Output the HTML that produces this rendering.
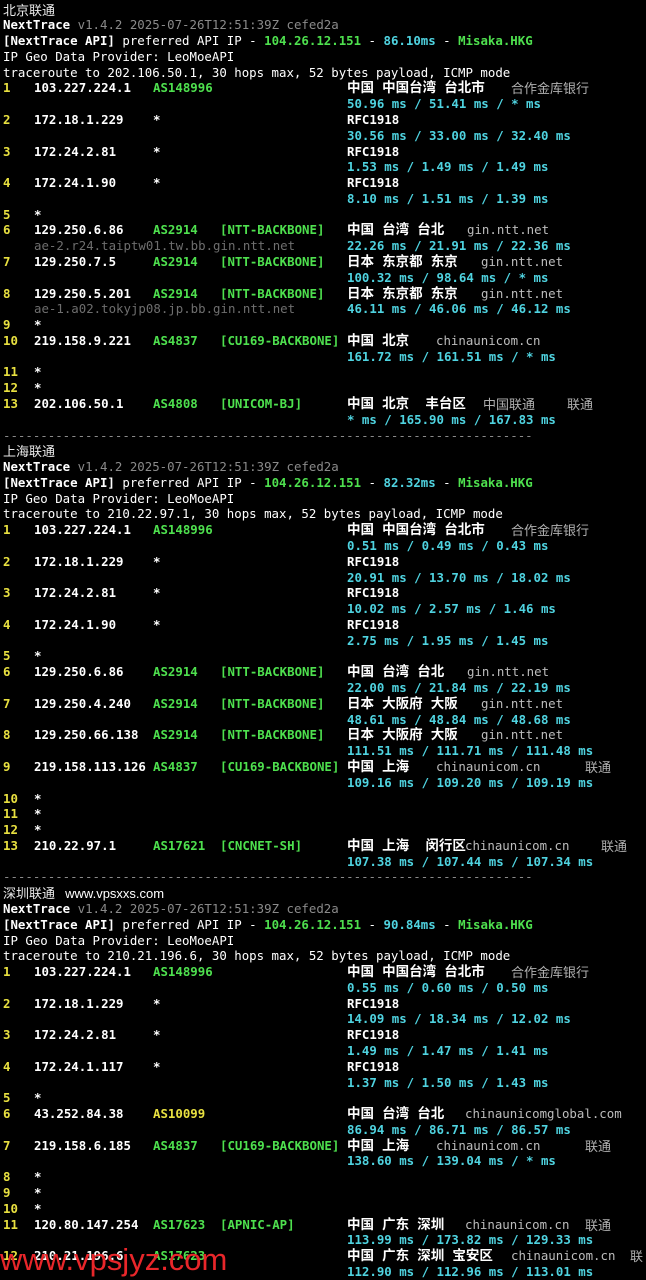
<!DOCTYPE html>
<html><head><meta charset="utf-8"><style>
html,body{margin:0;padding:0;background:#000;}
body{width:646px;height:1280px;position:relative;overflow:hidden;font-family:"DejaVu Sans Mono","Liberation Mono","Noto Sans CJK SC",monospace;font-size:12.4px;color:#d0d0d0;}
.r{position:absolute;left:0;width:646px;height:16px;line-height:16px;top:calc(var(--n)*15.78px + 1.5px);white-space:pre;}
.r span{position:absolute;top:0;}
.h{left:3px;color:#e8e040;font-weight:bold}
.i{left:34px;color:#fff;font-weight:bold}
.a{left:153px;color:#4ee04e;font-weight:bold}
.t{left:220px;color:#4ee04e;font-weight:bold}
.g{left:347px;color:#fff;font-weight:bold;font-family:"DejaVu Sans Mono","Noto Sans CJK SC",sans-serif;font-size:13.5px}
.m{left:347px;color:#4fd3e0;font-weight:bold}
.p{color:#bcbcbc;font-family:"DejaVu Sans Mono","Noto Sans CJK SC",monospace;}
.c{color:#b0b0b0;font-family:"Noto Sans CJK SC",sans-serif;font-size:13px}
.d{left:34px;color:#6e6e6e}
.l{left:3px}
.w{color:#fff}.wb{color:#fff;font-weight:bold}.gr{color:#8a8a8a}.gn{color:#4ee04e;font-weight:bold}.cy{color:#4fd3e0;font-weight:bold}
.cn{font-family:"Noto Sans CJK SC",sans-serif;font-size:13px;color:#e8e8e8}
.sep{left:3px;color:#8a8a8a}
.wm{position:absolute;left:0;top:1242px;font-family:"Liberation Sans",sans-serif;font-size:31px;color:#e8262a;letter-spacing:0px}
</style></head><body>

<div class="r" style="--n:0"><span class="l cn">北京联通</span></div>
<div class="r" style="--n:1"><span class="l"><b class="wb">NextTrace</b> <span style="position:static" class="gr">v1.4.2 2025-07-26T12:51:39Z cefed2a</span></span></div>
<div class="r" style="--n:2"><span class="l"><b class="wb">[NextTrace API]</b><span style="position:static" class="w"> preferred API IP - </span><b class="gn">104.26.12.151</b><span style="position:static" class="w"> - </span><b class="cy">86.10ms</b><span style="position:static" class="w"> - </span><b class="gn">Misaka.HKG</b></span></div>
<div class="r" style="--n:3"><span class="l w">IP Geo Data Provider: LeoMoeAPI</span></div>
<div class="r" style="--n:4"><span class="l w">traceroute to 202.106.50.1, 30 hops max, 52 bytes payload, ICMP mode</span></div>
<div class="r" style="--n:5"><span class="h">1</span><span class="i">103.227.224.1</span><span class="a">AS148996</span><span class="g">中国 中国台湾 台北市</span><span class="c" style="left:511px">合作金库银行</span></div>
<div class="r" style="--n:6"><span class="m">50.96 ms / 51.41 ms / * ms</span></div>
<div class="r" style="--n:7"><span class="h">2</span><span class="i">172.18.1.229</span><span class="a" style="color:#fff">*</span><span class="m" style="color:#fff">RFC1918</span></div>
<div class="r" style="--n:8"><span class="m">30.56 ms / 33.00 ms / 32.40 ms</span></div>
<div class="r" style="--n:9"><span class="h">3</span><span class="i">172.24.2.81</span><span class="a" style="color:#fff">*</span><span class="m" style="color:#fff">RFC1918</span></div>
<div class="r" style="--n:10"><span class="m">1.53 ms / 1.49 ms / 1.49 ms</span></div>
<div class="r" style="--n:11"><span class="h">4</span><span class="i">172.24.1.90</span><span class="a" style="color:#fff">*</span><span class="m" style="color:#fff">RFC1918</span></div>
<div class="r" style="--n:12"><span class="m">8.10 ms / 1.51 ms / 1.39 ms</span></div>
<div class="r" style="--n:13"><span class="h">5</span><span class="i">*</span></div>
<div class="r" style="--n:14"><span class="h">6</span><span class="i">129.250.6.86</span><span class="a">AS2914</span><span class="t">[NTT-BACKBONE]</span><span class="g">中国 台湾 台北</span><span class="p" style="left:467px">gin.ntt.net</span></div>
<div class="r" style="--n:15"><span class="d">ae-2.r24.taiptw01.tw.bb.gin.ntt.net</span><span class="m">22.26 ms / 21.91 ms / 22.36 ms</span></div>
<div class="r" style="--n:16"><span class="h">7</span><span class="i">129.250.7.5</span><span class="a">AS2914</span><span class="t">[NTT-BACKBONE]</span><span class="g">日本 东京都 东京</span><span class="p" style="left:481px">gin.ntt.net</span></div>
<div class="r" style="--n:17"><span class="m">100.32 ms / 98.64 ms / * ms</span></div>
<div class="r" style="--n:18"><span class="h">8</span><span class="i">129.250.5.201</span><span class="a">AS2914</span><span class="t">[NTT-BACKBONE]</span><span class="g">日本 东京都 东京</span><span class="p" style="left:481px">gin.ntt.net</span></div>
<div class="r" style="--n:19"><span class="d">ae-1.a02.tokyjp08.jp.bb.gin.ntt.net</span><span class="m">46.11 ms / 46.06 ms / 46.12 ms</span></div>
<div class="r" style="--n:20"><span class="h">9</span><span class="i">*</span></div>
<div class="r" style="--n:21"><span class="h">10</span><span class="i">219.158.9.221</span><span class="a">AS4837</span><span class="t">[CU169-BACKBONE]</span><span class="g">中国 北京</span><span class="p" style="left:436px">chinaunicom.cn</span></div>
<div class="r" style="--n:22"><span class="m">161.72 ms / 161.51 ms / * ms</span></div>
<div class="r" style="--n:23"><span class="h">11</span><span class="i">*</span></div>
<div class="r" style="--n:24"><span class="h">12</span><span class="i">*</span></div>
<div class="r" style="--n:25"><span class="h">13</span><span class="i">202.106.50.1</span><span class="a">AS4808</span><span class="t">[UNICOM-BJ]</span><span class="g">中国 北京  丰台区</span><span class="c" style="left:483px">中国联通</span><span class="c" style="left:567px">联通</span></div>
<div class="r" style="--n:26"><span class="m">* ms / 165.90 ms / 167.83 ms</span></div>
<div class="r" style="--n:27"><span class="sep">-----------------------------------------------------------------------</span></div>

<div class="r" style="--n:28"><span class="l cn">上海联通</span></div>
<div class="r" style="--n:29"><span class="l"><b class="wb">NextTrace</b> <span style="position:static" class="gr">v1.4.2 2025-07-26T12:51:39Z cefed2a</span></span></div>
<div class="r" style="--n:30"><span class="l"><b class="wb">[NextTrace API]</b><span style="position:static" class="w"> preferred API IP - </span><b class="gn">104.26.12.151</b><span style="position:static" class="w"> - </span><b class="cy">82.32ms</b><span style="position:static" class="w"> - </span><b class="gn">Misaka.HKG</b></span></div>
<div class="r" style="--n:31"><span class="l w">IP Geo Data Provider: LeoMoeAPI</span></div>
<div class="r" style="--n:32"><span class="l w">traceroute to 210.22.97.1, 30 hops max, 52 bytes payload, ICMP mode</span></div>
<div class="r" style="--n:33"><span class="h">1</span><span class="i">103.227.224.1</span><span class="a">AS148996</span><span class="g">中国 中国台湾 台北市</span><span class="c" style="left:511px">合作金库银行</span></div>
<div class="r" style="--n:34"><span class="m">0.51 ms / 0.49 ms / 0.43 ms</span></div>
<div class="r" style="--n:35"><span class="h">2</span><span class="i">172.18.1.229</span><span class="a" style="color:#fff">*</span><span class="m" style="color:#fff">RFC1918</span></div>
<div class="r" style="--n:36"><span class="m">20.91 ms / 13.70 ms / 18.02 ms</span></div>
<div class="r" style="--n:37"><span class="h">3</span><span class="i">172.24.2.81</span><span class="a" style="color:#fff">*</span><span class="m" style="color:#fff">RFC1918</span></div>
<div class="r" style="--n:38"><span class="m">10.02 ms / 2.57 ms / 1.46 ms</span></div>
<div class="r" style="--n:39"><span class="h">4</span><span class="i">172.24.1.90</span><span class="a" style="color:#fff">*</span><span class="m" style="color:#fff">RFC1918</span></div>
<div class="r" style="--n:40"><span class="m">2.75 ms / 1.95 ms / 1.45 ms</span></div>
<div class="r" style="--n:41"><span class="h">5</span><span class="i">*</span></div>
<div class="r" style="--n:42"><span class="h">6</span><span class="i">129.250.6.86</span><span class="a">AS2914</span><span class="t">[NTT-BACKBONE]</span><span class="g">中国 台湾 台北</span><span class="p" style="left:467px">gin.ntt.net</span></div>
<div class="r" style="--n:43"><span class="m">22.00 ms / 21.84 ms / 22.19 ms</span></div>
<div class="r" style="--n:44"><span class="h">7</span><span class="i">129.250.4.240</span><span class="a">AS2914</span><span class="t">[NTT-BACKBONE]</span><span class="g">日本 大阪府 大阪</span><span class="p" style="left:481px">gin.ntt.net</span></div>
<div class="r" style="--n:45"><span class="m">48.61 ms / 48.84 ms / 48.68 ms</span></div>
<div class="r" style="--n:46"><span class="h">8</span><span class="i">129.250.66.138</span><span class="a">AS2914</span><span class="t">[NTT-BACKBONE]</span><span class="g">日本 大阪府 大阪</span><span class="p" style="left:481px">gin.ntt.net</span></div>
<div class="r" style="--n:47"><span class="m">111.51 ms / 111.71 ms / 111.48 ms</span></div>
<div class="r" style="--n:48"><span class="h">9</span><span class="i">219.158.113.126</span><span class="a">AS4837</span><span class="t">[CU169-BACKBONE]</span><span class="g">中国 上海</span><span class="p" style="left:436px">chinaunicom.cn</span><span class="c" style="left:585px">联通</span></div>
<div class="r" style="--n:49"><span class="m">109.16 ms / 109.20 ms / 109.19 ms</span></div>
<div class="r" style="--n:50"><span class="h">10</span><span class="i">*</span></div>
<div class="r" style="--n:51"><span class="h">11</span><span class="i">*</span></div>
<div class="r" style="--n:52"><span class="h">12</span><span class="i">*</span></div>
<div class="r" style="--n:53"><span class="h">13</span><span class="i">210.22.97.1</span><span class="a">AS17621</span><span class="t">[CNCNET-SH]</span><span class="g">中国 上海  闵行区</span><span class="p" style="left:465px">chinaunicom.cn</span><span class="c" style="left:601px">联通</span></div>
<div class="r" style="--n:54"><span class="m">107.38 ms / 107.44 ms / 107.34 ms</span></div>
<div class="r" style="--n:55"><span class="sep">-----------------------------------------------------------------------</span></div>

<div class="r" style="--n:56"><span class="l cn">深圳联通 <span style="position:static;font-family:'Liberation Sans',sans-serif;font-size:13px;color:#fff">  www.vpsxxs.com</span></span></div>
<div class="r" style="--n:57"><span class="l"><b class="wb">NextTrace</b> <span style="position:static" class="gr">v1.4.2 2025-07-26T12:51:39Z cefed2a</span></span></div>
<div class="r" style="--n:58"><span class="l"><b class="wb">[NextTrace API]</b><span style="position:static" class="w"> preferred API IP - </span><b class="gn">104.26.12.151</b><span style="position:static" class="w"> - </span><b class="cy">90.84ms</b><span style="position:static" class="w"> - </span><b class="gn">Misaka.HKG</b></span></div>
<div class="r" style="--n:59"><span class="l w">IP Geo Data Provider: LeoMoeAPI</span></div>
<div class="r" style="--n:60"><span class="l w">traceroute to 210.21.196.6, 30 hops max, 52 bytes payload, ICMP mode</span></div>
<div class="r" style="--n:61"><span class="h">1</span><span class="i">103.227.224.1</span><span class="a">AS148996</span><span class="g">中国 中国台湾 台北市</span><span class="c" style="left:511px">合作金库银行</span></div>
<div class="r" style="--n:62"><span class="m">0.55 ms / 0.60 ms / 0.50 ms</span></div>
<div class="r" style="--n:63"><span class="h">2</span><span class="i">172.18.1.229</span><span class="a" style="color:#fff">*</span><span class="m" style="color:#fff">RFC1918</span></div>
<div class="r" style="--n:64"><span class="m">14.09 ms / 18.34 ms / 12.02 ms</span></div>
<div class="r" style="--n:65"><span class="h">3</span><span class="i">172.24.2.81</span><span class="a" style="color:#fff">*</span><span class="m" style="color:#fff">RFC1918</span></div>
<div class="r" style="--n:66"><span class="m">1.49 ms / 1.47 ms / 1.41 ms</span></div>
<div class="r" style="--n:67"><span class="h">4</span><span class="i">172.24.1.117</span><span class="a" style="color:#fff">*</span><span class="m" style="color:#fff">RFC1918</span></div>
<div class="r" style="--n:68"><span class="m">1.37 ms / 1.50 ms / 1.43 ms</span></div>
<div class="r" style="--n:69"><span class="h">5</span><span class="i">*</span></div>
<div class="r" style="--n:70"><span class="h">6</span><span class="i">43.252.84.38</span><span class="a" style="color:#e8e040">AS10099</span><span class="g">中国 台湾 台北</span><span class="p" style="left:465px">chinaunicomglobal.com</span></div>
<div class="r" style="--n:71"><span class="m">86.94 ms / 86.71 ms / 86.57 ms</span></div>
<div class="r" style="--n:72"><span class="h">7</span><span class="i">219.158.6.185</span><span class="a">AS4837</span><span class="t">[CU169-BACKBONE]</span><span class="g">中国 上海</span><span class="p" style="left:436px">chinaunicom.cn</span><span class="c" style="left:585px">联通</span></div>
<div class="r" style="--n:73"><span class="m">138.60 ms / 139.04 ms / * ms</span></div>
<div class="r" style="--n:74"><span class="h">8</span><span class="i">*</span></div>
<div class="r" style="--n:75"><span class="h">9</span><span class="i">*</span></div>
<div class="r" style="--n:76"><span class="h">10</span><span class="i">*</span></div>
<div class="r" style="--n:77"><span class="h">11</span><span class="i">120.80.147.254</span><span class="a">AS17623</span><span class="t">[APNIC-AP]</span><span class="g">中国 广东 深圳</span><span class="p" style="left:465px">chinaunicom.cn</span><span class="c" style="left:585px">联通</span></div>
<div class="r" style="--n:78"><span class="m">113.99 ms / 173.82 ms / 129.33 ms</span></div>
<div class="r" style="--n:79"><span class="h">12</span><span class="i">210.21.196.6</span><span class="a">AS17623</span><span class="g">中国 广东 深圳 宝安区</span><span class="p" style="left:511px">chinaunicom.cn</span><span class="c" style="left:630px">联</span></div>
<div class="r" style="--n:80"><span class="m">112.90 ms / 112.96 ms / 113.01 ms</span></div>

<div class="wm">www.vpsjyz.com</div>
</body></html>
